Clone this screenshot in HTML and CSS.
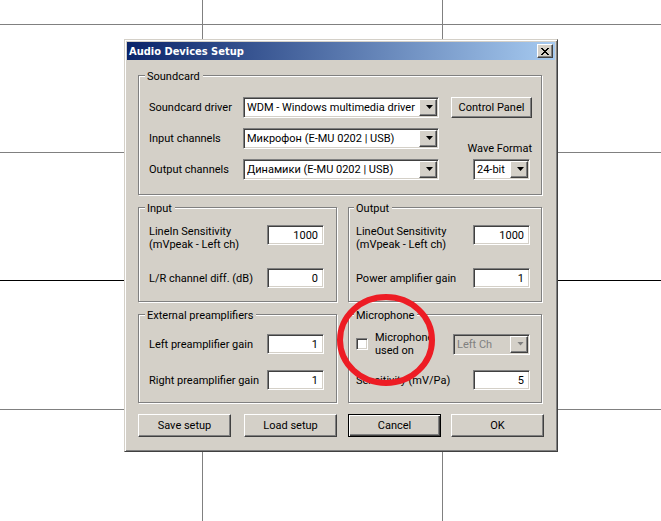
FILE: index.html
```html
<!DOCTYPE html>
<html lang="en">
<head>
<meta charset="utf-8">
<title>Audio Devices Setup</title>
<link rel="stylesheet" href="styles.css">
</head>
<body>
<main class="desktop">
  <section class="dialog" role="dialog" aria-labelledby="dialog-title">
    <header class="titlebar">
      <h1 id="dialog-title">Audio Devices Setup</h1>
      <button class="btn close" type="button" aria-label="Close">
        <svg width="8" height="7" viewBox="0 0 8 7" shape-rendering="crispEdges"><path d="M0 0h2v1h1v1h2V1h1V0h2v1H7v1H6v1H5v1h1v1h1v1h1v1H6V6H5V5H3v1H2v1H0V6h1V5h1V4h1V3H2V2H1V1H0z"/></svg>
      </button>
    </header>
    <form class="content">
      <fieldset class="soundcard">
        <legend>Soundcard</legend>
        <div class="sound-grid">
          <label for="driver">Soundcard driver</label>
          <span class="combo"><select id="driver"><option>WDM - Windows multimedia driver</option></select></span>
          <button class="btn" type="button">Control Panel</button>
          <label for="in-ch">Input channels</label>
          <span class="combo"><select id="in-ch"><option>Микрофон (E-MU 0202 | USB)</option></select></span>
          <div class="wave">
            <label for="wave">Wave Format</label>
            <span class="combo"><select id="wave"><option>24-bit</option></select></span>
          </div>
          <label for="out-ch">Output channels</label>
          <span class="combo"><select id="out-ch"><option>Динамики (E-MU 0202 | USB)</option></select></span>
        </div>
      </fieldset>
      <div class="groups">
        <fieldset class="levels">
          <legend>Input</legend>
          <div class="row"><label for="linein">LineIn Sensitivity<br>(mVpeak - Left ch)</label><input class="num" id="linein" value="1000"></div>
          <div class="row"><label for="diff">L/R channel diff. (dB)</label><input class="num" id="diff" value="0"></div>
        </fieldset>
        <fieldset class="levels right">
          <legend>Output</legend>
          <div class="row"><label for="lineout">LineOut Sensitivity<br>(mVpeak - Left ch)</label><input class="num" id="lineout" value="1000"></div>
          <div class="row"><label for="power">Power amplifier gain</label><input class="num" id="power" value="1"></div>
        </fieldset>
        <fieldset class="preamps">
          <legend>External preamplifiers</legend>
          <div class="row"><label for="left-gain">Left preamplifier gain</label><input class="num" id="left-gain" value="1"></div>
          <div class="row"><label for="right-gain">Right preamplifier gain</label><input class="num" id="right-gain" value="1"></div>
        </fieldset>
        <fieldset class="preamps right">
          <legend>Microphone</legend>
          <div class="row">
            <label class="check" for="mic"><input type="checkbox" id="mic"><span>Microphone<br>used on</span></label>
            <span class="combo mic-channel"><select aria-label="Microphone channel" disabled><option>Left Ch</option></select></span>
          </div>
          <div class="row"><label for="sens">Sensitivity (mV/Pa)</label><input class="num" id="sens" value="5"></div>
          <svg class="marker" width="100" height="94" viewBox="0 0 100 94" aria-hidden="true"><ellipse cx="50" cy="47" rx="46" ry="43" fill="none" stroke="#ed1c24" stroke-width="6"/></svg>
        </fieldset>
      </div>
      <div class="actions">
        <div class="pair">
          <button class="btn" type="button">Save setup</button>
          <button class="btn" type="button">Load setup</button>
        </div>
        <div class="pair">
          <button class="btn default" type="button">Cancel</button>
          <button class="btn" type="button">OK</button>
        </div>
      </div>
    </form>
  </section>
</main>
</body>
</html>
```
FILE: styles.css
```css
:root {
  --face: #d4d0c8;
  --shade: #808080;
  --dark: #404040;
}

* { box-sizing: border-box; }

body {
  margin: 0;
  min-height: 100vh;
  font: 11px/13px Roboto, "Liberation Sans", sans-serif;
  color: #000;
  background:
    linear-gradient(#000, #000) 0 280px / 100% 1px,
    linear-gradient(#808080, #808080) 0 24px / 100% 1px,
    linear-gradient(#808080, #808080) 0 152px / 100% 1px,
    linear-gradient(#808080, #808080) 0 409px / 100% 1px,
    linear-gradient(#808080, #808080) 202px 0 / 1px 100%,
    linear-gradient(#808080, #808080) 442px 0 / 1px 100%,
    #fff;
  background-repeat: no-repeat;
}

.desktop { padding: 39px 103px 39px 124px; }

.dialog {
  padding: 2px;
  border: 1px solid var(--dark);
  border-top-color: var(--face);
  border-left-color: var(--face);
  box-shadow: inset 1px 1px #fff, inset -1px -1px var(--shade);
  background: var(--face);
}

.titlebar {
  display: flex;
  align-items: center;
  justify-content: space-between;
  height: 18px;
  padding: 0 2px;
  background: linear-gradient(to right, #0a246a, #a6caf0);
}

.titlebar h1 {
  margin: 0;
  font-family: "DejaVu Sans Condensed", "Noto Sans", sans-serif;
  font-size: 11px;
  font-weight: bold;
  color: #fff;
}

.btn {
  padding: 0;
  border: 1px solid var(--dark);
  border-top-color: #fff;
  border-left-color: #fff;
  border-radius: 0;
  box-shadow: inset -1px -1px var(--shade);
  background: var(--face);
  font: inherit;
  color: #000;
  white-space: nowrap;
}

.btn.default {
  border-color: #000;
  box-shadow: inset 1px 1px #fff, inset -1px -1px var(--dark), inset -2px -2px var(--shade);
}

.close {
  display: grid;
  place-items: center;
  width: 16px;
  height: 14px;
}

.content { padding: 8px 11px 12px; }

fieldset {
  position: relative;
  min-width: 0;
  margin: 0;
  padding: 0;
  border: 1px solid var(--shade);
  box-shadow: 1px 1px #fff, inset 1px 1px #fff;
}

legend {
  margin-left: -4px;
  padding: 2px 3px 0 2px;
  background: var(--face);
}

.right legend { margin-left: -2px; }

label { white-space: nowrap; }

.soundcard {
  margin-right: 2px;
  padding: 14px 9px 14px 10px;
}

.sound-grid {
  display: grid;
  grid-template-columns: 82px 1fr 81px;
  grid-auto-rows: 21px;
  gap: 10px 12px;
  align-items: center;
}

.sound-grid > .btn { height: 21px; }

.wave {
  grid-column: 3;
  grid-row: 2 / span 2;
  display: flex;
  flex-direction: column;
  align-items: flex-end;
  align-self: end;
  gap: 4px;
}

.wave .combo {
  width: 57px;
  margin-right: 2px;
}

.combo {
  position: relative;
  display: block;
}

select, .num {
  width: 100%;
  margin: 0;
  border: 1px solid #fff;
  border-top-color: var(--shade);
  border-left-color: var(--shade);
  border-radius: 0;
  box-shadow: inset 1px 1px var(--dark), inset -1px -1px var(--face);
  background: #fff;
  font: inherit;
  color: #000;
}

select {
  display: block;
  height: 21px;
  padding: 0 18px 0 3px;
  appearance: none;
}

.combo::before {
  content: "";
  position: absolute;
  top: 2px;
  right: 2px;
  bottom: 2px;
  width: 16px;
  border: 1px solid var(--dark);
  border-top-color: #fff;
  border-left-color: #fff;
  box-shadow: inset -1px -1px var(--shade);
  background: var(--face);
  pointer-events: none;
}

.combo::after {
  content: "";
  position: absolute;
  top: 8px;
  right: 6px;
  width: 7px;
  height: 4px;
  background: #000;
  clip-path: polygon(0 0, 100% 0, 50% 100%);
  pointer-events: none;
}

select:disabled {
  background: var(--face);
  color: var(--shade);
  opacity: 1;
}

.mic-channel { width: 77px; }
.mic-channel::after { background: var(--shade); }

.num {
  width: 57px;
  height: 20px;
  padding: 0 5px;
  text-align: right;
}

.groups {
  display: grid;
  grid-template-columns: 199fr 194fr;
  gap: 5px 11px;
  margin: 5px 2px 0 0;
}

.levels { padding: 10px 12px 13px 10px; }
.preamps { padding: 12px 12px 12px 10px; }
.right { padding-left: 7px; padding-right: 11px; }

.row {
  display: flex;
  align-items: center;
  justify-content: space-between;
  min-height: 20px;
}

.row + .row { margin-top: 16px; }
.levels .row:first-of-type { height: 27px; align-items: flex-start; }
.preamps .row { height: 20px; }

.check {
  display: flex;
  align-items: center;
  gap: 7px;
}

.check input {
  width: 12px;
  height: 12px;
  margin: 0;
  border: 1px solid #fff;
  border-top-color: var(--shade);
  border-left-color: var(--shade);
  box-shadow: inset 1px 1px var(--dark), inset -1px -1px var(--face);
  background: #fff;
  appearance: none;
}

/* Hand-drawn ring laid over the microphone options */
.marker {
  position: absolute;
  top: -29px;
  left: -13px;
  pointer-events: none;
}

.actions {
  display: grid;
  grid-template-columns: 199fr 196fr;
  gap: 11px;
  margin-top: 11px;
}

.pair {
  display: flex;
  justify-content: space-between;
}

.pair .btn {
  width: 93px;
  height: 23px;
}
```
